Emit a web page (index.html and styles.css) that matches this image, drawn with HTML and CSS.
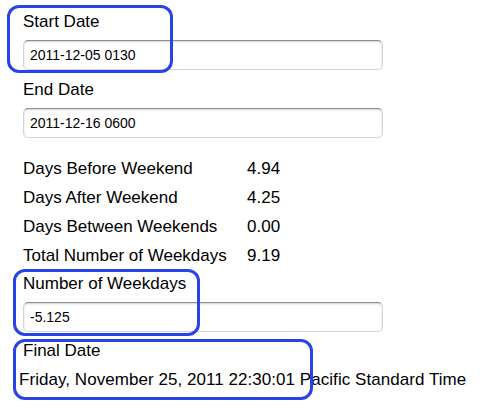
FILE: index.html
```html
<!DOCTYPE html>
<html>
<head>
<meta charset="utf-8">
<link rel="stylesheet" href="styles.css">
</head>
<body>
<div class="page">
  <div class="form">
    <div class="label first">Start Date</div>
    <div class="input">2011-12-05 0130</div>
    <div class="label">End Date</div>
    <div class="input">2011-12-16 0600</div>
    <div class="stats">
      <div>Days Before Weekend</div><div>4.94</div>
      <div>Days After Weekend</div><div>4.25</div>
      <div>Days Between Weekends</div><div>0.00</div>
      <div>Total Number of Weekdays</div><div>9.19</div>
    </div>
    <div class="label after-stats">Number of Weekdays</div>
    <div class="input">-5.125</div>
    <div class="label final">Final Date</div>
  </div>
  <div class="result">Friday, November 25, 2011 22:30:01 Pacific Standard Time</div>
  <div class="mark mark-start"></div>
  <div class="mark mark-weekdays"></div>
  <div class="mark mark-final"></div>
</div>
</body>
</html>
```
FILE: styles.css
```css
html, body {
  margin: 0;
  padding: 0;
  background: #ffffff;
}
.page {
  position: relative;
  width: 483px;
  height: 412px;
  overflow: hidden;
  font-family: "Liberation Sans", Arial, sans-serif;
  font-size: 17px;
  color: #000;
}
.form {
  padding-left: 23px;
  width: 360px;
}
.label {
  line-height: 20px;
  height: 20px;
  margin-top: 10px;
}
.label.first {
  margin-top: 0;
  padding-top: 12px;
}
.label.after-stats {
  margin-top: 4px;
}
.label.final {
  margin-top: 9px;
}
.input {
  box-sizing: border-box;
  height: 30px;
  margin-top: 8px;
  border: 1px solid #d4d4d4;
  border-top-color: #8e8e8e;
  border-radius: 5px;
  box-shadow: inset 0 1px 2px rgba(0,0,0,0.18);
  background: #fff;
  font-size: 14px;
  line-height: 28px;
  padding-left: 6px;
}
.stats {
  display: grid;
  grid-template-columns: 224px auto;
  line-height: 29px;
  margin-top: 16px;
}
.result {
  padding-left: 19px;
  margin-top: 9px;
  line-height: 20px;
  white-space: nowrap;
  letter-spacing: 0.05px;
}
.mark {
  position: absolute;
  box-sizing: border-box;
  border: 3px solid #2843e8;
  border-radius: 12px;
}
.mark-start {
  left: 7px;
  top: 5px;
  width: 166px;
  height: 68px;
}
.mark-weekdays {
  left: 13px;
  top: 269px;
  width: 187px;
  height: 67px;
}
.mark-final {
  left: 13px;
  top: 339px;
  width: 300px;
  height: 61px;
}
```
